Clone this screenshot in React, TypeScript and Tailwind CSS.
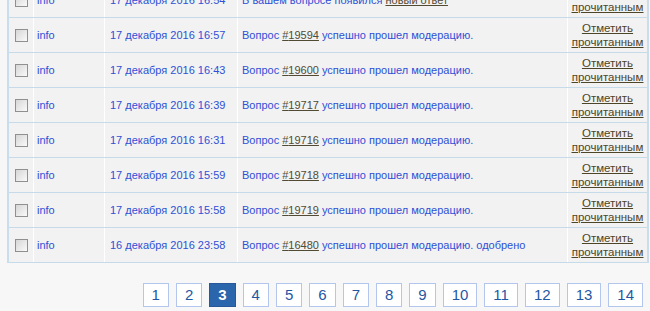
import React from 'react';

interface Notice {
  date: string;
  question?: string;
  text?: string;
  tail?: string;
}

const rows: Notice[] = [
  { date: '17 декабря 2016 16:54', text: 'В вашем вопросе появился ' },
  { date: '17 декабря 2016 16:57', question: '19594' },
  { date: '17 декабря 2016 16:43', question: '19600' },
  { date: '17 декабря 2016 16:39', question: '19717' },
  { date: '17 декабря 2016 16:31', question: '19716' },
  { date: '17 декабря 2016 15:59', question: '19718' },
  { date: '17 декабря 2016 15:58', question: '19719' },
  { date: '16 декабря 2016 23:58', question: '16480', tail: ' одобрено' },
];

const pages = [1, 2, 3, 4, 5, 6, 7, 8, 9, 10, 11, 12, 13, 14];

const Checkbox = () => (
  <span className="block w-[13px] h-[13px] border border-[#8f9090] bg-linear-to-br from-[#d6d6d6] to-[#fafafa]" />
);

export default function App() {
  return (
    <div className="w-full h-[311px] overflow-hidden bg-[#f7f7f7] font-['Liberation_Sans',Arial,sans-serif] text-[11px] text-[#2f50d6]">
      {/* Table */}
      <div className="ml-[7px] w-[642px] -mt-[17px] border-l-2 border-r-2 border-[#c9deec]">
        {rows.map((r, i) => (
          <div
            key={i}
            className="grid grid-cols-[24px_70px_132px_1fr_79px] gap-x-px bg-white border-b border-[#c5dbea] h-[35px]"
          >
            <div className="bg-[#f2f2f2] flex items-center pl-[6px]">
              <Checkbox />
            </div>
            <div className="bg-[#f2f2f2] flex items-center pl-[3px]">info</div>
            <div className="bg-[#f2f2f2] flex items-center pl-[5px]">{r.date}</div>
            <div className="bg-[#f2f2f2] flex items-center pl-[4px] whitespace-nowrap">
              {r.question ? (
                <span>
                  Вопрос <a className="text-[#514b33] underline">#{r.question}</a> успешно прошел модерацию.{r.tail}
                </span>
              ) : (
                <span>
                  {r.text}
                  <a className="text-[#514b33] underline">новый ответ</a>
                </span>
              )}
            </div>
            <div className="bg-[#f2f2f2] flex flex-col items-center justify-center text-[11.5px] leading-[14px] text-[#4d4528] underline">
              <a>Отметить</a>
              <a>прочитанным</a>
            </div>
          </div>
        ))}
      </div>

      {/* Pagination */}
      <div className="flex justify-end gap-[7px] pr-[7px] mt-[20px]">
        {pages.map((p) =>
          p === 3 ? (
            <span
              key={p}
              className="h-[24px] px-2 leading-[22px] text-[15px] font-bold text-white bg-[#2b65ab] border border-[#27599a]"
            >
              {p}
            </span>
          ) : (
            <span
              key={p}
              className="h-[24px] px-2 leading-[22px] text-[15px] text-[#1f57a3] bg-white border border-[#b2c6ee]"
            >
              {p}
            </span>
          )
        )}
      </div>
    </div>
  );
}
